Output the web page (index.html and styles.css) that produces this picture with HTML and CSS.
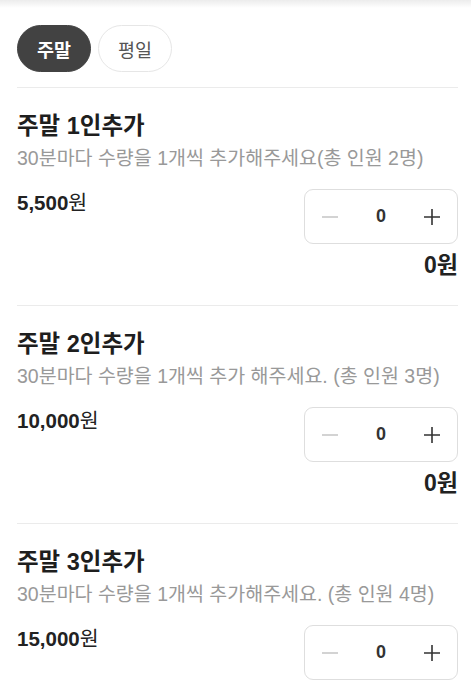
FILE: index.html
```html
<!DOCTYPE html>
<html lang="ko">
<head>
<meta charset="utf-8">
<link rel="stylesheet" href="styles.css">
</head>
<body>
<div class="topshade"></div>
<main class="page">
  <div class="tabs">
    <button class="tab active">주말</button>
    <button class="tab">평일</button>
  </div>
  <section class="item">
    <h2 class="title">주말 1인추가</h2>
    <p class="desc">30분마다 수량을 1개씩 추가해주세요(총 인원 2명)</p>
    <div class="row">
      <div class="price"><b>5,500</b>원</div>
      <div class="stepper">
        <span class="btn minus"><svg width="16" height="16" viewBox="0 0 16 16"><path d="M0 8H16" stroke="#c8c8c8" stroke-width="1.6"/></svg></span>
        <span class="qty">0</span>
        <span class="btn plus"><svg width="16" height="16" viewBox="0 0 16 16"><path d="M0 8H16M8 0V16" stroke="#333" stroke-width="1.6"/></svg></span>
      </div>
    </div>
    <div class="total"><b>0</b>원</div>
  </section>
  <section class="item">
    <h2 class="title">주말 2인추가</h2>
    <p class="desc">30분마다 수량을 1개씩 추가 해주세요. (총 인원 3명)</p>
    <div class="row">
      <div class="price"><b>10,000</b>원</div>
      <div class="stepper">
        <span class="btn minus"><svg width="16" height="16" viewBox="0 0 16 16"><path d="M0 8H16" stroke="#c8c8c8" stroke-width="1.6"/></svg></span>
        <span class="qty">0</span>
        <span class="btn plus"><svg width="16" height="16" viewBox="0 0 16 16"><path d="M0 8H16M8 0V16" stroke="#333" stroke-width="1.6"/></svg></span>
      </div>
    </div>
    <div class="total"><b>0</b>원</div>
  </section>
  <section class="item">
    <h2 class="title">주말 3인추가</h2>
    <p class="desc">30분마다 수량을 1개씩 추가해주세요. (총 인원 4명)</p>
    <div class="row">
      <div class="price"><b>15,000</b>원</div>
      <div class="stepper">
        <span class="btn minus"><svg width="16" height="16" viewBox="0 0 16 16"><path d="M0 8H16" stroke="#c8c8c8" stroke-width="1.6"/></svg></span>
        <span class="qty">0</span>
        <span class="btn plus"><svg width="16" height="16" viewBox="0 0 16 16"><path d="M0 8H16M8 0V16" stroke="#333" stroke-width="1.6"/></svg></span>
      </div>
    </div>
    <div class="total"><b>0</b>원</div>
  </section>
</main>
</body>
</html>
```
FILE: styles.css
```css
html, body {
  margin: 0;
  padding: 0;
  background: #fff;
  font-family: "Liberation Sans", "Noto Sans CJK KR", sans-serif;
  color: #222;
}
.topshade {
  height: 8px;
  background: linear-gradient(to bottom, #ececec, #ffffff);
}
.page {
  padding: 0 13px 0 17px;
}
.tabs {
  display: flex;
  gap: 7px;
  padding-top: 17px;
  padding-bottom: 15px;
  border-bottom: 1px solid #ebebeb;
}
.tab {
  width: 74px;
  height: 47px;
  border-radius: 24px;
  border: 1px solid #e6e6e6;
  background: #fff;
  color: #555;
  font-family: "Liberation Sans", "Noto Sans CJK KR", sans-serif;
  font-size: 18.5px;
  padding: 0;
}
.tab.active {
  background: #424242;
  border-color: #424242;
  color: #fff;
  font-weight: bold;
}
.item {
  padding: 24px 0 26px;
  border-bottom: 1px solid #ebebeb;
}
.title {
  margin: 0;
  font-size: 23.5px;
  line-height: 28px;
  font-weight: bold;
  color: #1e1e1e;
}
.desc {
  margin: 6px 0 0;
  font-size: 19.5px;
  line-height: 24px;
  color: #999;
  white-space: nowrap;
}
.row {
  display: flex;
  justify-content: space-between;
  align-items: flex-start;
  margin-top: 19px;
}
.price {
  font-size: 20.5px;
  line-height: 24px;
  padding-top: 2px;
  color: #222;
}
.price b {
  font-weight: bold;
}
.stepper {
  box-sizing: border-box;
  width: 154px;
  height: 55px;
  border: 1px solid #dedede;
  border-radius: 9px;
  display: flex;
  align-items: center;
  justify-content: space-between;
  padding: 0 17px 0 17px;
}
.btn {
  display: flex;
  width: 16px;
  height: 16px;
}
.qty {
  font-size: 18px;
  font-weight: bold;
  color: #333;
}
.total {
  margin-top: 7px;
  text-align: right;
  font-size: 23px;
  line-height: 28px;
  font-weight: bold;
  color: #222;
}
```
